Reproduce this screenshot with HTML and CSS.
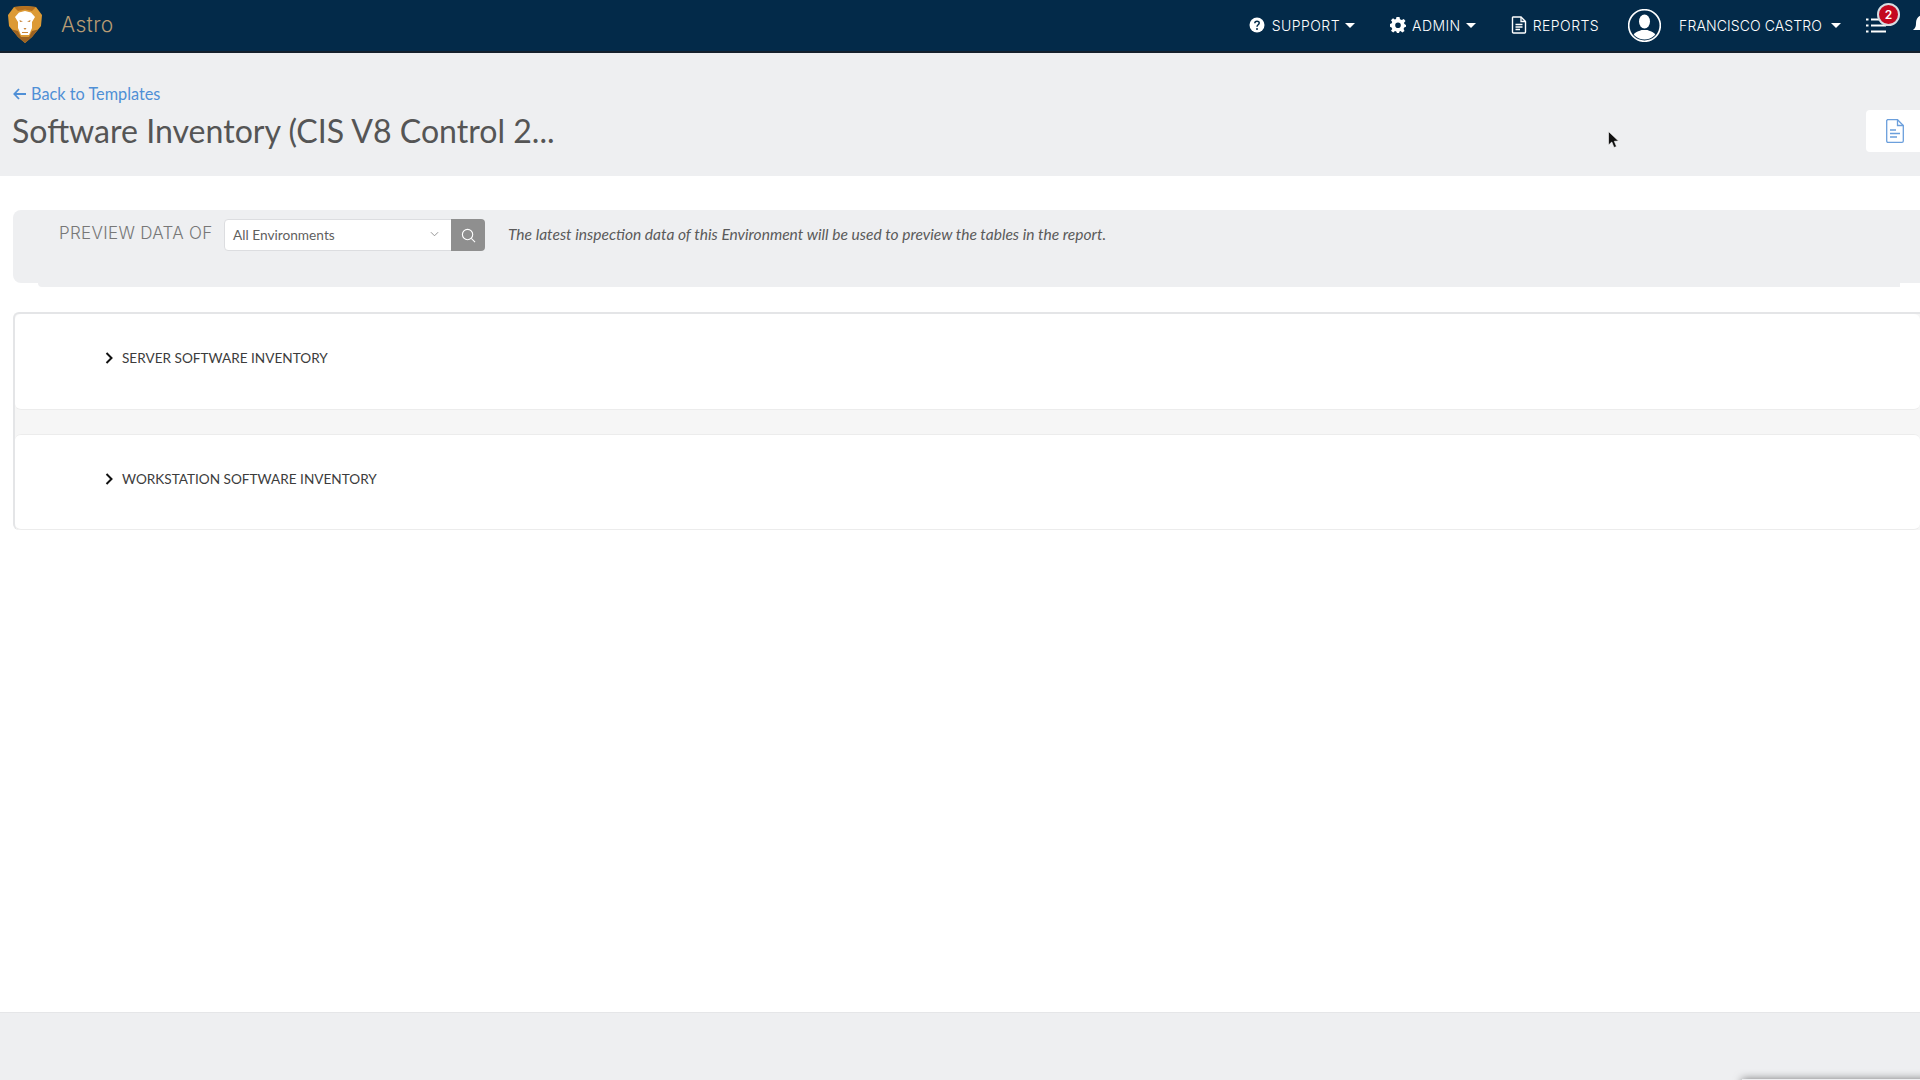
FILE: index.html
```html
<!DOCTYPE html>
<html lang="en">

<head>
  <meta charset="UTF-8">
  <title>Software Inventory</title>
  <link rel="stylesheet" href="styles.css">
</head>

<body>
  <nav class="topbar">
    <svg class="logo" viewBox="0 0 34 37">
      <path fill="#dc9a35" d="M6 1 L17 0 L28 1 L34 9 L33 20 L24 31 L17 37 L10 31 L1 20 L0 9 Z" />
      <path fill="#b4701f" d="M6 1 L17 0 L28 1 L24 5 L17 3.500 L10 5 Z" />
      <path fill="#9c6222" d="M17 37 L10 31 L4 23.500 L10 25 L13 31 L21 31 L24 25 L30 23.500 L24 31 Z" />
      <path fill="#fff" d="M11 6.500 L17 5 L23 6.500 L27 11 L24 16 L24 22 L21 29 L13 29 L10 22 L10 16 L7 11 Z" />
      <path fill="#c9853a" d="M11.500 14 L15 15.500 L12 16 Z M22.500 14 L19 15.500 L22 16 Z M15.500 22 L18.500 22 L17 24 Z M14 26 H20 V27 H14 Z" />
    </svg>
    <div class="brand">Astro</div>

    <div class="nav_menu">
      <div class="nav_item support">
        <svg class="nav_icon" viewBox="0 0 16 16">
          <circle cx="8" cy="8" r="7.500" fill="#fff" />
          <path d="M5.800 6.200 C5.900 3.600 10.200 3.600 10.200 6.100 C10.200 7.800 8 7.800 8 9.700" fill="none" stroke="#032a49" stroke-width="1.500" />
          <circle cx="8" cy="12" r="1" fill="#032a49" />
        </svg>
        <span class="nav_text">SUPPORT</span>
        <span class="caret"></span>
      </div>
      <div class="nav_item admin">
        <svg class="nav_icon" viewBox="0 0 16 16">
          <path fill="#fff" fill-rule="evenodd" d="M6.500 0 H9.500 L10 2.300 L11.800 3.100 L13.800 1.900 L15.500 4 L14 5.800 L14.400 7 L16 8 L16 9.800 L14.200 10.400 L13.600 12 L14.500 14 L12.300 15.500 L10.600 14 L9.500 14.400 L9 16 H7 L6.300 14.400 L5 14 L3.200 15.500 L1 13.700 L2.300 12 L1.600 10.400 L0 9.800 V7 L1.700 6.300 L2.200 5 L1 3.200 L3 1.300 L4.800 2.500 L6 2 Z M8 5.400 A2.800 2.800 0 1 0 8 11 A2.800 2.800 0 1 0 8 5.400 Z" />
        </svg>
        <span class="nav_text">ADMIN</span>
        <span class="caret"></span>
      </div>
      <div class="nav_item reports">
        <svg class="nav_icon" viewBox="0 0 16 18">
          <path d="M2 1 H10 L14.500 5.500 V16 C14.500 16.600 14 17 13.500 17 H2.500 C2 17 1.500 16.600 1.500 16 V1.500 Z" fill="none" stroke="#fff" stroke-width="1.400" />
          <path d="M10 1 V5.500 H14.500 M4.500 8.500 H11.500 M4.500 11 H11.500 M4.500 13.500 H9" fill="none" stroke="#fff" stroke-width="1.300" />
        </svg>
        <span class="nav_text">REPORTS</span>
      </div>
      <svg class="avatar" viewBox="0 0 33 33">
        <defs>
          <clipPath id="avatar_clip">
            <circle cx="16.500" cy="16.500" r="14" />
          </clipPath>
        </defs>
        <circle cx="16.500" cy="16.500" r="15.800" fill="#032a49" stroke="#fff" stroke-width="1.600" />
        <g clip-path="url(#avatar_clip)" fill="#fff">
          <ellipse cx="16.500" cy="12.500" rx="5.500" ry="7" />
          <path d="M3 33 C3 24 9 23 13.500 21 H19.500 C24 23 30 24 30 33 Z" />
        </g>
      </svg>
      <div class="nav_item user">
        <span class="nav_text">FRANCISCO CASTRO</span>
        <span class="caret"></span>
      </div>
      <div class="tasks">
        <svg class="task_icon" viewBox="0 0 20 15">
          <path d="M0 1.500 H2.500 M5 1.500 H20 M0 7.500 H2.500 M5 7.500 H20 M0 13.500 H2.500 M5 13.500 H20" stroke="#fff" stroke-width="2" fill="none" />
        </svg>
        <span class="badge">2</span>
      </div>
      <div class="bell">
        <svg class="bell_icon" viewBox="0 0 18 20">
          <path fill="#fff" d="M9 0 C5 1 3 4 3 8 C3 12 2 13 0 15 H18 C16 13 15 12 15 8 C15 4 13 1 9 0 Z" />
        </svg>
      </div>
    </div>
  </nav>

  <header class="page_head">
    <div class="head_left">
      <a class="back_link">
        <svg class="back_arrow" viewBox="0 0 13 12">
          <path d="M6 1 L1.300 6 L6 11 M1.300 6 H13" fill="none" stroke="#4f8fd6" stroke-width="1.800" />
        </svg>
        Back to Templates
      </a>
      <h1 class="page_title">Software Inventory (CIS V8 Control 2...</h1>
    </div>
    <div class="head_action">
      <svg class="doc_icon" viewBox="0 0 18 24">
        <path d="M1.500 0.700 H11.500 L17.300 6.500 V22 C17.300 22.800 16.800 23.300 16 23.300 H2 C1.200 23.300 0.700 22.800 0.700 22 V1.500 Z" fill="none" stroke="#6b9fdc" stroke-width="1.300" />
        <path d="M11.500 0.700 V6.500 H17.300 M4 11 H10 M4 14.500 H14 M4 18 H11" fill="none" stroke="#6b9fdc" stroke-width="1.300" />
      </svg>
    </div>
  </header>

  <main class="content">
    <section class="preview">
      <span class="preview_label">PREVIEW DATA OF</span>
      <div class="env_select">
        <span>All Environments</span>
        <svg class="select_arrow" viewBox="0 0 10 6">
          <path d="M1 1 L5 5 L9 1" fill="none" stroke="#8a8a8a" stroke-width="1" />
        </svg>
      </div>
      <button type="button" class="search_btn">
        <svg viewBox="0 0 16 16">
          <circle cx="7" cy="7" r="5.500" fill="none" stroke="#fff" stroke-width="1.200" />
          <path d="M11 11 L15 15" stroke="#fff" stroke-width="1.200" />
        </svg>
      </button>
      <p class="preview_note">The latest inspection data of this Environment will be used to preview the tables in the report.</p>
    </section>

    <section class="tables">
      <div class="table_card">
        <svg class="chevron" viewBox="0 0 8 12">
          <path d="M1.500 1 L6.500 6 L1.500 11" fill="none" stroke="#111" stroke-width="2" />
        </svg>
        <span>SERVER SOFTWARE INVENTORY</span>
      </div>
      <div class="table_card">
        <svg class="chevron" viewBox="0 0 8 12">
          <path d="M1.500 1 L6.500 6 L1.500 11" fill="none" stroke="#111" stroke-width="2" />
        </svg>
        <span>WORKSTATION SOFTWARE INVENTORY</span>
      </div>
    </section>
  </main>

  <footer class="page_foot">
    <div class="foot_shadow"></div>
  </footer>

  <svg class="cursor" viewBox="0 0 11 18">
    <path d="M0.500 0.500 V14 L3.800 11 L6 16.500 L8.500 15.500 L6.300 10.300 L10.500 10 Z" fill="#111" stroke="#fff" stroke-width="0.600" />
  </svg>
</body>

</html>
```

FILE: styles.css
```css
* {
  box-sizing: border-box;
  margin: 0;
  padding: 0;
}

html,
body {
  height: 100%;
}

body {
  width: 1920px;
  height: 1080px;
  overflow: hidden;
  position: relative;

  display: flex;
  flex-direction: column;

  background-color: white;
  font-family: "Lato", "Liberation Sans", sans-serif;
}

.topbar {
  height: 53px;
  flex-shrink: 0;

  display: flex;
  align-items: center;

  background-color: #032a49;
  border-bottom: 2px solid #14202c;
  padding-left: 8px;
}

.logo {
  width: 34px;
  height: 37px;
  margin-bottom: 2px;
}

.brand {
  margin-left: 19px;
  margin-bottom: 2px;
  color: #b89c74;
  font-family: "Inter", "Liberation Sans", sans-serif;
  font-size: 21px;
  font-weight: 300;
  letter-spacing: 0.3px;
}

.nav_menu {
  margin-left: auto;
  height: 100%;
  padding-bottom: 1px;

  display: flex;
  align-items: center;

  color: white;
  font-family: "Inter", "Liberation Sans", sans-serif;
  font-size: 14px;
  font-weight: 300;
  letter-spacing: 0.45px;
}

.nav_item {
  display: flex;
  align-items: center;
}

.nav_icon {
  width: 16px;
  height: 16px;
  margin-right: 8px;
}

.support .nav_icon {
  margin-right: 7px;
}

.admin .nav_icon {
  margin-right: 6px;
}

.reports .nav_icon {
  height: 18px;
  margin-right: 6px;
}

.caret {
  margin-left: 5px;
  border-left: 5px solid transparent;
  border-right: 5px solid transparent;
  border-top: 5px solid white;
}

.admin {
  margin-left: 35px;
}

.reports {
  margin-left: 35px;
}

.avatar {
  width: 33px;
  height: 33px;
  margin-left: 29px;
}

.user {
  margin-left: 18px;
  letter-spacing: 0.1px;
}

.user .caret {
  margin-left: 9px;
}

.tasks {
  margin-left: 25px;
  position: relative;

  display: flex;
}

.task_icon {
  width: 20px;
  height: 15px;
}

.badge {
  position: absolute;
  left: 11px;
  top: -15px;

  width: 23px;
  height: 23px;

  display: flex;
  justify-content: center;
  align-items: center;

  background-color: #c4071f;
  border: 2px solid #d7dde2;
  border-radius: 50%;
  color: white;
  font-size: 12px;
  font-weight: 600;
  letter-spacing: 0;
}

.bell {
  width: 7px;
  margin-left: 27px;
  overflow: hidden;
  display: flex;
}

.bell_icon {
  width: 18px;
  height: 20px;
  flex-shrink: 0;
}

.page_head {
  height: 123px;
  flex-shrink: 0;

  display: flex;
  justify-content: space-between;
  align-items: flex-start;

  background-color: #eeeff1;
  padding-left: 13px;
}

.head_left {
  padding-top: 29px;
}

.back_link {
  display: flex;
  align-items: center;
  gap: 5px;

  color: #4f8fd6;
  font-size: 16.3px;
  line-height: 24px;
}

.back_arrow {
  width: 13px;
  height: 12px;
}

.page_title {
  margin-top: 4px;
  margin-left: -1px;
  color: #555;
  font-size: 32.1px;
  font-weight: 400;
  line-height: 42px;
}

.head_action {
  width: 54px;
  height: 42px;
  margin-top: 57px;

  display: flex;
  align-items: center;
  padding-left: 20px;

  background-color: white;
  border-radius: 4px 0 0 4px;
}

.doc_icon {
  width: 18px;
  height: 24px;
}

.content {
  flex: 1;
  padding: 34px 0 0 13px;
}

.preview {
  height: 73px;
  position: relative;

  display: flex;
  align-items: flex-start;

  padding: 9px 0 0 46px;
  background-color: #eeeff1;
  border-radius: 8px 0 0 8px;
}

.preview::after {
  content: "";
  position: absolute;
  top: 100%;
  left: 25px;
  right: 20px;
  height: 4px;
  background-color: #eeeff1;
  border-radius: 0 0 0 6px;
}

.preview_label {
  width: 165px;
  color: #777;
  font-family: "Inter", "Liberation Sans", sans-serif;
  font-size: 17px;
  font-weight: 300;
  letter-spacing: 0.3px;
  line-height: 28px;
  white-space: nowrap;
}

.env_select {
  width: 228px;
  height: 32px;

  display: flex;
  justify-content: space-between;
  align-items: center;

  padding: 0 12px 2px 8px;
  background-color: white;
  border: 1px solid #dcdde0;
  border-radius: 4px 0 0 4px;

  color: #5f5f5f;
  font-size: 13.7px;
}

.select_arrow {
  width: 9px;
  height: 6px;
}

.search_btn {
  width: 34px;
  height: 32px;
  margin-left: -1px;

  display: flex;
  justify-content: center;
  align-items: center;

  background-color: #8f8f8f;
  border: none;
  border-radius: 0 4px 4px 0;
}

.search_btn svg {
  width: 15px;
  height: 15px;
}

.preview_note {
  margin-left: 23px;
  color: #5a5a5a;
  font-size: 15.55px;
  font-style: italic;
  line-height: 31px;
}

.tables {
  margin-top: 29px;
  height: 218px;

  display: flex;
  flex-direction: column;
  gap: 24px;

  background-color: #f6f6f6;
  border-top: 2px solid #e4e5e7;
  border-left: 2px solid #e4e5e7;
  border-radius: 6px 0 0 6px;
}

.table_card {
  height: 96px;

  display: flex;
  align-items: center;

  padding: 0 0 7px 90px;
  background-color: white;
  border-bottom: 1px solid #ececec;
  border-radius: 6px;

  color: #3c3c3c;
  font-size: 13.6px;
}

.table_card + .table_card {
  border-top: 1px solid #ececec;
}

.chevron {
  width: 8px;
  height: 12px;
  margin-right: 9px;
}

.page_foot {
  height: 68px;
  flex-shrink: 0;
  position: relative;

  background-color: #eeeff1;
  border-top: 1px solid #e5e6e8;
}

.foot_shadow {
  position: absolute;
  left: 1742px;
  top: 66px;
  width: 200px;
  height: 20px;
  box-shadow: 0 0 8px rgba(0, 0, 0, 0.5);
}

.cursor {
  position: absolute;
  left: 1608px;
  top: 131px;
  width: 11px;
  height: 18px;
}
```
